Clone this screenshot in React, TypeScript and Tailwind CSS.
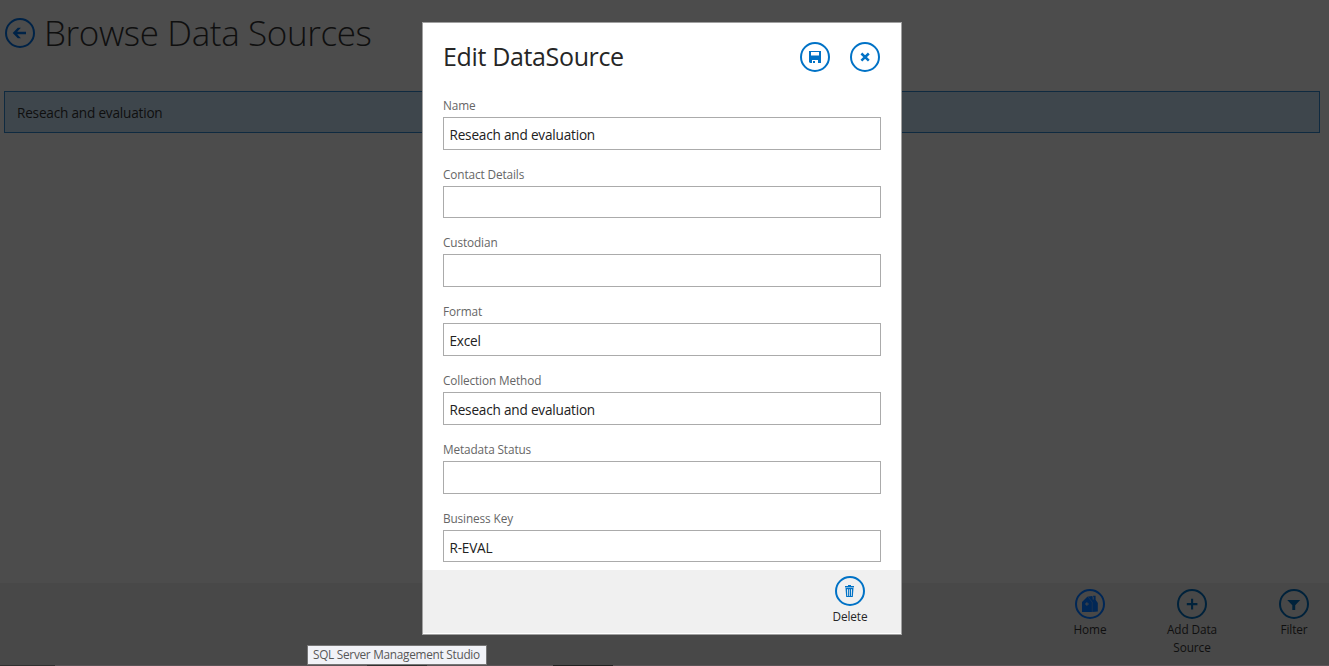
import React from "react";

type IconName = "back" | "save" | "close" | "trash" | "home" | "plus" | "filter";

function Glyph({ name }: { name: IconName }) {
  switch (name) {
    case "back":
      return (
        <path
          d="M7.7 15l5.1-5.3h3.1L12.2 13.8H21v2.4h-8.8l3.7 4.1h-3.1z"
          fill="currentColor"
        />
      );
    case "save":
      return (
        <path
          fillRule="evenodd"
          fill="currentColor"
          d="M9 9h12v12h-3v-3h-6v3h-2l-1-1zM11 10v3.5h8V10zM13 19h2v2h-2z"
        />
      );
    case "close":
      return <path d="M11.4 11.5l7.4 7.2M18.8 11.5l-7.4 7.2" stroke="currentColor" strokeWidth="2.5" />;
    case "trash":
      return (
        <path
          fillRule="evenodd"
          fill="currentColor"
          d="M13 9h3v1h3v1.5h-9V10h3zM10.5 12h8l-.7 9h-6.6zM12 13.3l.3 6.7h.8v-6.7zM14.2 13.3V20h.7v-6.7zM16 13.3V20h.7l.3-6.7z"
        />
      );
    case "home":
      return (
        <>
          <path d="M7 13l5.3-5.3L17 7l1.2 1.2V6.7h2.4v4l2.2 3.3v8.5L17 23H7z" fill="currentColor" />
          <path d="M10 15h3.8M11.9 13.2v3.6M18.2 8v2.6" stroke="#484848" strokeWidth="0.9" fill="none" />
          <path d="M13.2 8l4 5.2V23" stroke="#484848" strokeWidth="0.35" fill="none" />
        </>
      );
    case "plus":
      return <path d="M15.1 9.8v10.6M9.8 15.1h10.6" stroke="currentColor" strokeWidth="2.1" />;
    case "filter":
      return <path d="M8.2 11h13L16.2 16.2V21h-2.9v-4.8z" fill="currentColor" />;
  }
}

function RoundIcon({ name, className }: { name: IconName; className: string }) {
  return (
    <svg viewBox="0 0 30 30" className={`block size-[30px] shrink-0 ${className}`}>
      <circle cx="15" cy="15" r="14" fill="none" stroke="currentColor" strokeWidth="2" />
      <Glyph name={name} />
    </svg>
  );
}

const fields = [
  { label: "Name", value: "Reseach and evaluation" },
  { label: "Contact Details", value: "" },
  { label: "Custodian", value: "" },
  { label: "Format", value: "Excel" },
  { label: "Collection Method", value: "Reseach and evaluation" },
  { label: "Metadata Status", value: "" },
  { label: "Business Key", value: "R-EVAL" },
];

const commands: { icon: IconName; label: string; color: string }[] = [
  { icon: "home", label: "Home", color: "text-[#002756]" },
  { icon: "plus", label: "Add Data Source", color: "text-[#00223b]" },
  { icon: "filter", label: "Filter", color: "text-[#00223b]" },
];

export default function App() {
  return (
    <div className="relative flex h-[666px] w-[1329px] flex-col overflow-hidden bg-[#4c4c4c] font-['Open_Sans','Noto_Sans',sans-serif] text-[#0f0f0f]">
      <header className="flex h-[91px] items-start pl-[5px] pt-[18px]">
        <RoundIcon name="back" className="text-[#002347]" />
        <h1 className="-mt-[9px] ml-[9px] whitespace-nowrap text-[35px] font-light leading-[48px] tracking-[-0.38px]">
          Browse Data Sources
        </h1>
      </header>
      <main className="flex-1 pl-1 pr-[9px]">
        <div className="flex h-[42px] items-center border border-[#0f2a40] bg-[#3e464c] pl-3 pt-[2px] text-[13.6px] tracking-[-0.2px]">
          Reseach and evaluation
        </div>
      </main>
      <footer className="flex h-[83px] justify-end border-b border-[#5a5457] bg-[#484848] pt-[6px]">
        {commands.map((c) => (
          <div key={c.label} className="ml-8 flex w-[70px] flex-col items-center text-center text-[11.8px] leading-[18px] tracking-[-0.08px]">
            <RoundIcon name={c.icon} className={c.color} />
            <span className="mt-px w-[64px]">{c.label}</span>
          </div>
        ))}
      </footer>

      <section className="absolute left-[422px] top-[22px] flex h-[613px] w-[480px] flex-col border border-[#a0a0a0] bg-white text-[#262626]">
        <div className="flex h-[73.8px] shrink-0 items-start pl-5 pr-[21px] pt-[19px]">
          <h2 className="-mt-[4px] flex-1 whitespace-nowrap text-[25px] leading-[36px] tracking-[-0.35px]">Edit DataSource</h2>
          <RoundIcon name="save" className="mr-5 text-[#0072c6]" />
          <RoundIcon name="close" className="text-[#0072c6]" />
        </div>
        <div className="min-h-0 flex-1 overflow-hidden px-5">
          {fields.map((f) => (
            <label key={f.label} className="block h-[68.8px]">
              <span className="block h-5 text-[11.8px] leading-[16.4px] tracking-[-0.12px] text-[#666666]">{f.label}</span>
              <span className="flex h-[32.8px] items-center border border-[#ababab] pl-[5.5px] pt-[4px] text-[13.6px] tracking-[-0.2px] text-[#212121]">
                {f.value}
              </span>
            </label>
          ))}
        </div>
        <div className="flex h-[64px] shrink-0 justify-end border-b border-white bg-[#f0f0f0] pr-4 pt-[6px]">
          <div className="flex w-[70px] flex-col items-center text-[11.8px] leading-[18px] tracking-[-0.12px]">
            <RoundIcon name="trash" className="text-[#0072c6]" />
            <span className="mt-px">Delete</span>
          </div>
        </div>
      </section>

      <div className="absolute left-[307px] top-[645px] flex h-5 w-[180px] items-center whitespace-nowrap border border-[#767676] bg-[#f1f2f7] pl-[5px] text-[11.8px] tracking-[-0.27px] text-[#575757]">
        SQL Server Management Studio
      </div>
      <div className="absolute bottom-0 left-0 h-px w-[55px] bg-[#303030]" />
      <div className="absolute bottom-0 left-[367px] h-px w-[60px] bg-[#303030]" />
      <div className="absolute bottom-0 left-[553px] h-px w-[60px] bg-[#222222]" />
    </div>
  );
}
